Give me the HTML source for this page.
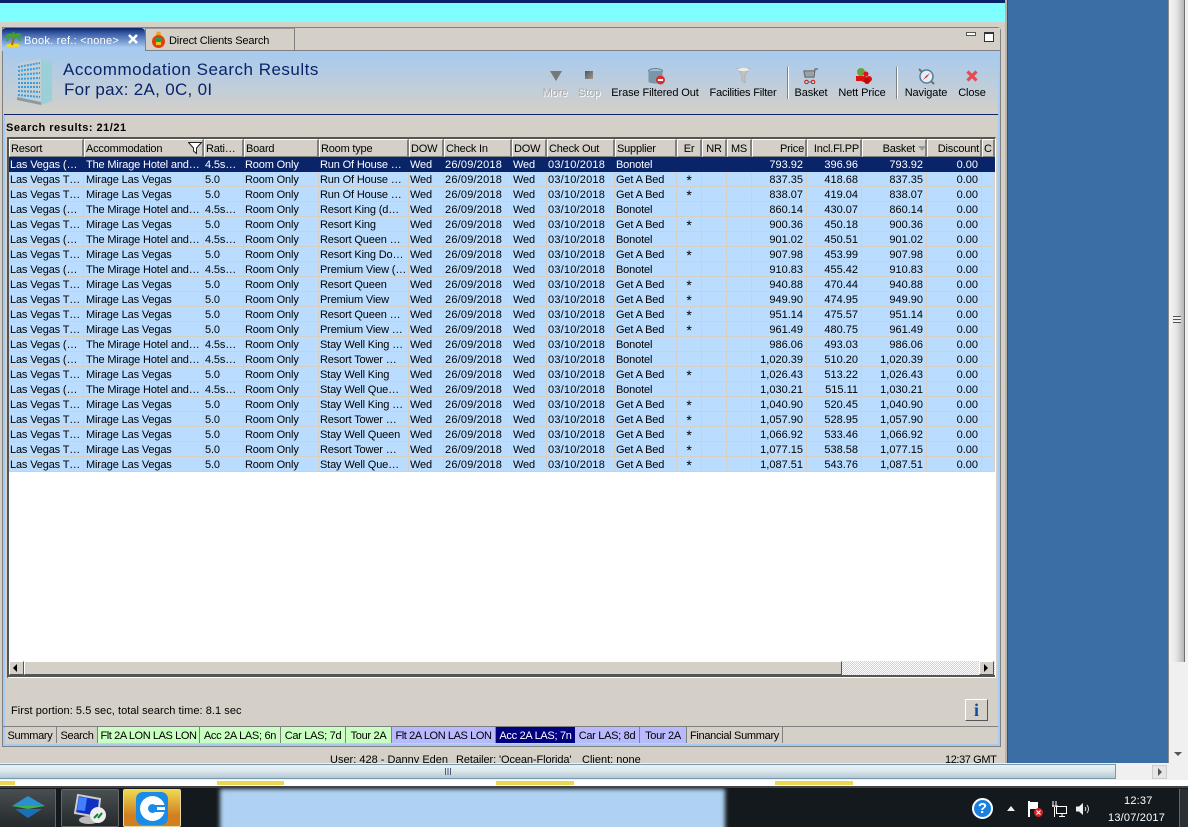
<!DOCTYPE html>
<html><head><meta charset="utf-8"><title>Accommodation Search Results</title>
<style>
html,body{margin:0;padding:0}
body{width:1188px;height:827px;overflow:hidden;position:relative;background:#d4d0c8;font:11px/15px "Liberation Sans",sans-serif;color:#000}
.a{position:absolute}
.t{position:absolute;white-space:nowrap}
table{border-collapse:separate;border-spacing:0;table-layout:fixed;width:986px;position:absolute;left:9px;top:139px}
th{font-weight:normal;text-align:left;padding:2px 0 0 1px;line-height:14px;letter-spacing:-.2px;background:#d4d0c8;border-top:1px solid #fff;border-left:1px solid #fff;border-right:2px solid #808080;border-bottom:1px solid #808080;box-sizing:border-box;height:18px;overflow:hidden;white-space:nowrap}
td{height:15px;padding:2px 0 0 1px;box-sizing:border-box;background:#b9dcff;border-right:1px solid #d4d0c8;border-bottom:1px solid #d4d0c8;white-space:nowrap;overflow:hidden;line-height:12px;letter-spacing:-.15px}
td:nth-child(2){padding-left:2px}
td:nth-child(7),td:nth-child(9){letter-spacing:.2px}
th.r,td.r{text-align:right}
td.r{padding:2px 3px 0 0;letter-spacing:0}
th.r{padding:2px 1px 0 0}
.c{text-align:center;padding:2px 0 0}
td.c{font-size:14px;padding-top:1px;line-height:12px}
tr.s td{background:#0a246a;color:#fff;border-color:#0a246a}
.tab{position:absolute;top:727px;height:16px;line-height:18px;text-align:center;border-right:1px solid #808080;box-sizing:border-box;white-space:nowrap;overflow:hidden;letter-spacing:-.3px}
.g{background:#c9ffc0}.l{background:#b9b9ff}
.lb{position:absolute;top:86px;line-height:14px;white-space:nowrap;transform:translateX(-50%);letter-spacing:-.1px}
.sep{position:absolute;top:67px;width:1px;height:32px;background:#808080;border-right:1px solid #fff}
</style></head><body>
<div class="a" style="left:0;top:0;width:1005px;height:3px;background:#0a246a"></div>
<div class="a" style="left:0;top:3px;width:1005px;height:19px;background:#7fffff"></div>
<div class="a" style="left:1005px;top:0;width:2px;height:763px;background:#b8b4ac"></div>
<div class="a" style="left:1007px;top:0;width:1px;height:763px;background:#504c48"></div>
<div class="a" style="left:1008px;top:0;width:160px;height:763px;background:#3a6ea5"></div>
<div class="a" style="left:1168px;top:0;width:20px;height:780px;background:#f0f0f0"></div>
<div class="a" style="left:1168px;top:0;width:1px;height:763px;background:#8a8a8a"></div>
<div class="a" style="left:1169px;top:0;width:15px;height:662px;background:linear-gradient(90deg,#f4f4f4,#e8e8e8 45%,#b8b8b8)"></div>
<div class="a" style="left:1184px;top:0;width:1px;height:662px;background:#707070"></div>
<div class="a" style="left:1173px;top:316px;width:8px;height:7px;background:repeating-linear-gradient(180deg,#555 0 1px,#eee 1px 3px)"></div>
<div class="a" style="left:1174px;top:752px;border-top:4px solid #555;border-left:4px solid transparent;border-right:4px solid transparent"></div>

<!-- window -->
<div class="a" style="left:2px;top:27px;width:999px;height:720px;box-sizing:border-box;border:1px solid #808080;border-top-right-radius:4px;background:#a6caf0"></div>
<div class="a" style="left:5px;top:51px;width:993px;height:693px;background:#d4d0c8"></div>
<div class="a" style="left:295px;top:28px;width:705px;height:22px;background:#d4d0c8;border-bottom:1px solid #808080"></div>
<div class="a" style="left:3px;top:51px;width:995px;height:64px;background:linear-gradient(180deg,#a6caf0,#d4d0c8)"></div>
<div class="a" style="left:4px;top:114px;width:994px;height:1px;background:#0a246a"></div>

<!-- tabs -->
<div class="a" style="left:2px;top:28px;width:143px;height:23px;border-radius:4px 4px 0 0;background:linear-gradient(180deg,#0a246a,#3a5ea8 25%,#a6caf0 85%)"></div>
<svg class="a" style="left:5px;top:31px" width="17" height="17" viewBox="0 0 17 17"><ellipse cx="8" cy="14.500" rx="7" ry="2" fill="#f2d820"/><path d="M9 6 C8 9 8 11 7 14" stroke="#a06a20" stroke-width="2" fill="none"/><path d="M9 6 Q5 1 1 6 M9 6 Q4 4 2 10 M9 6 Q13 1 16 5 M9 6 Q14 5 15 10 M9 6 Q9 2 8 1" stroke="#3aa828" stroke-width="2" fill="none"/></svg>
<div class="t" style="left:24px;top:34px;color:#fff;letter-spacing:.25px">Book. ref.: &lt;none&gt;</div>
<svg class="a" style="left:128px;top:34px" width="10" height="10"><path d="M1 1 L9 9 M9 1 L1 9" stroke="#fff" stroke-width="2.500"/></svg>
<div class="a" style="left:145px;top:28px;width:150px;height:23px;box-sizing:border-box;background:#d4d0c8;border:1px solid #808080;border-top:1px solid #999"></div>
<svg class="a" style="left:151px;top:31px" width="15" height="17" viewBox="0 0 15 17"><circle cx="7.500" cy="3" r="2.500" fill="#f0a020"/><circle cx="7.500" cy="10.500" r="6.500" fill="#e04010"/><rect x="4" y="7" width="7" height="4" fill="#20a040"/><rect x="5" y="11" width="5" height="3" fill="#f0c020"/></svg>
<div class="t" style="left:169px;top:34px;letter-spacing:-.15px">Direct Clients Search</div>
<div class="a" style="left:966px;top:32px;width:8px;height:2px;border:1px solid #555;background:#fff"></div>
<div class="a" style="left:984px;top:32px;width:8px;height:7px;border:1px solid #333;border-top-width:2px;background:#fff"></div>

<!-- header -->
<svg class="a" style="left:15px;top:57px" width="38" height="49" viewBox="0 0 38 49"><path d="M2 7 L26 2 L37 4 V44 L26 48 L2 43 Z" fill="#c4d0d4"/><path d="M26 2 L37 4 V44 L26 48 Z" fill="#9cd0d8"/><g fill="none" stroke="#3a9ce0" stroke-width="2" stroke-dasharray="2 1"><path d="M3 10 L25 6"/><path d="M3 14 L25 11"/><path d="M3 18 L25 16"/><path d="M3 22 L25 21"/><path d="M3 26 L25 26"/><path d="M3 30 L25 30"/><path d="M3 34 L25 35"/><path d="M3 38 L25 40"/></g><path d="M2 43 L26 48 L26 45 L2 40Z" fill="#8a9aa0"/></svg>
<div class="t" style="left:63px;top:60px;font-size:17px;line-height:20px;color:#0a246a;letter-spacing:.5px">Accommodation Search Results</div>
<div class="t" style="left:64px;top:80px;font-size:17px;line-height:20px;color:#0a246a;letter-spacing:.3px">For pax: 2A, 0C, 0I</div>

<!-- toolbar -->
<svg class="a" style="left:550px;top:71px" width="12" height="10"><path d="M0 0 H12 L6 10Z" fill="#777"/></svg>
<div class="a" style="left:585px;top:71px;width:8px;height:8px;background:linear-gradient(135deg,#555,#999)"></div>
<svg class="a" style="left:648px;top:68px" width="18" height="17"><ellipse cx="7.500" cy="3" rx="7" ry="2.500" fill="#a0c0d0" stroke="#708090"/><path d="M.5 3 V14 C3 16 12 16 14.500 14 V3" fill="#7a96a8"/><circle cx="12.500" cy="12" r="4.500" fill="#d83030"/><rect x="10" y="11" width="5" height="2" fill="#fff"/></svg>
<svg class="a" style="left:737px;top:68px" width="13" height="16"><path d="M0 0 H13 L8 7 V15 L5 13 V7Z" fill="#c0c4c0" stroke="#999" stroke-width=".5"/><ellipse cx="6.500" cy="1.500" rx="6" ry="1.500" fill="#eee"/></svg>
<div class="lb" style="left:555px;color:#a8a8a8;text-shadow:1px 1px 0 #fff">More</div>
<div class="lb" style="left:589px;color:#a8a8a8;text-shadow:1px 1px 0 #fff">Stop</div>
<div class="lb" style="left:655px">Erase Filtered Out</div>
<div class="lb" style="left:743px;letter-spacing:-.2px">Facilities Filter</div>
<div class="sep" style="left:787px"></div>
<svg class="a" style="left:803px;top:68px" width="16" height="16"><path d="M15 1 H12 L11 9 H2 L1 3 H12" fill="none" stroke="#666" stroke-width="1.200"/><path d="M3 3 V9 M5 3 V9 M7 3 V9 M9 3 V9 M1.500 5 H11 M1.500 7 H11" stroke="#888" stroke-width=".8"/><circle cx="3.500" cy="14" r="1.800" fill="none" stroke="#d01010"/><circle cx="10" cy="14" r="1.800" fill="none" stroke="#d01010"/><path d="M5 14 H8" stroke="#666"/></svg>
<div class="lb" style="left:811px">Basket</div>
<svg class="a" style="left:855px;top:68px" width="17" height="16"><circle cx="6" cy="4" r="4" fill="#6aa040"/><rect x="1" y="8" width="7" height="5" fill="#e01010"/><circle cx="11" cy="6" r="2.500" fill="#e01010"/><circle cx="9" cy="11" r="3" fill="#e01010"/><circle cx="14" cy="11" r="3" fill="#e01010"/><circle cx="12" cy="13" r="3" fill="#c00808"/></svg>
<div class="lb" style="left:862px">Nett Price</div>
<div class="sep" style="left:896px"></div>
<svg class="a" style="left:918px;top:68px" width="17" height="17"><circle cx="8.500" cy="8.500" r="6.500" fill="#dff0f8" stroke="#5a7a98" stroke-width="1.500"/><path d="M1 1 L4 4 M13 13 L16 16" stroke="#8a6a40" stroke-width="2"/><path d="M12 5 L8 8 L5 12 L9 9Z" fill="#d02020"/></svg>
<div class="lb" style="left:926px">Navigate</div>
<svg class="a" style="left:966px;top:70px" width="12" height="12"><path d="M1.500 1.500 L10.500 10.500 M10.500 1.500 L1.500 10.500" stroke="#e84850" stroke-width="3.200"/></svg>
<div class="lb" style="left:972px">Close</div>

<div class="t" style="left:6px;top:121px;font-weight:bold;letter-spacing:.5px">Search results: 21/21</div>

<!-- table box -->
<div class="a" style="left:7px;top:137px;width:989px;height:541px;box-sizing:border-box;background:#fff;border:2px solid #555;border-right:1px solid #fff;border-bottom:1px solid #fff"></div>
<table>
<colgroup><col style="width:75px"><col style="width:120px"><col style="width:40px"><col style="width:75px"><col style="width:90px"><col style="width:35px"><col style="width:68px"><col style="width:35px"><col style="width:68px"><col style="width:62px"><col style="width:25px"><col style="width:25px"><col style="width:25px"><col style="width:55px"><col style="width:55px"><col style="width:65px"><col style="width:55px"><col style="width:13px"></colgroup>
<tr><th>Resort</th><th>Accommodation</th><th>Rati…</th><th>Board</th><th>Room type</th><th>DOW</th><th>Check In</th><th>DOW</th><th>Check Out</th><th>Supplier</th><th class="c">Er</th><th class="c">NR</th><th class="c">MS</th><th class="r">Price</th><th class="r">Incl.Fl.PP</th><th class="r" style="padding-right:10px">Basket</th><th class="r">Discount</th><th>C</th></tr>
<tr class="s"><td>Las Vegas (…</td><td>The Mirage Hotel and…</td><td>4.5s…</td><td>Room Only</td><td>Run Of House …</td><td>Wed</td><td>26/09/2018</td><td>Wed</td><td>03/10/2018</td><td>Bonotel</td><td class="c"></td><td></td><td></td><td class="r">793.92</td><td class="r">396.96</td><td class="r">793.92</td><td class="r">0.00</td><td></td></tr>
<tr><td>Las Vegas T…</td><td>Mirage Las Vegas</td><td>5.0</td><td>Room Only</td><td>Run Of House …</td><td>Wed</td><td>26/09/2018</td><td>Wed</td><td>03/10/2018</td><td>Get A Bed</td><td class="c">*</td><td></td><td></td><td class="r">837.35</td><td class="r">418.68</td><td class="r">837.35</td><td class="r">0.00</td><td></td></tr>
<tr><td>Las Vegas T…</td><td>Mirage Las Vegas</td><td>5.0</td><td>Room Only</td><td>Run Of House …</td><td>Wed</td><td>26/09/2018</td><td>Wed</td><td>03/10/2018</td><td>Get A Bed</td><td class="c">*</td><td></td><td></td><td class="r">838.07</td><td class="r">419.04</td><td class="r">838.07</td><td class="r">0.00</td><td></td></tr>
<tr><td>Las Vegas (…</td><td>The Mirage Hotel and…</td><td>4.5s…</td><td>Room Only</td><td>Resort King (d…</td><td>Wed</td><td>26/09/2018</td><td>Wed</td><td>03/10/2018</td><td>Bonotel</td><td class="c"></td><td></td><td></td><td class="r">860.14</td><td class="r">430.07</td><td class="r">860.14</td><td class="r">0.00</td><td></td></tr>
<tr><td>Las Vegas T…</td><td>Mirage Las Vegas</td><td>5.0</td><td>Room Only</td><td>Resort King</td><td>Wed</td><td>26/09/2018</td><td>Wed</td><td>03/10/2018</td><td>Get A Bed</td><td class="c">*</td><td></td><td></td><td class="r">900.36</td><td class="r">450.18</td><td class="r">900.36</td><td class="r">0.00</td><td></td></tr>
<tr><td>Las Vegas (…</td><td>The Mirage Hotel and…</td><td>4.5s…</td><td>Room Only</td><td>Resort Queen …</td><td>Wed</td><td>26/09/2018</td><td>Wed</td><td>03/10/2018</td><td>Bonotel</td><td class="c"></td><td></td><td></td><td class="r">901.02</td><td class="r">450.51</td><td class="r">901.02</td><td class="r">0.00</td><td></td></tr>
<tr><td>Las Vegas T…</td><td>Mirage Las Vegas</td><td>5.0</td><td>Room Only</td><td>Resort King Do…</td><td>Wed</td><td>26/09/2018</td><td>Wed</td><td>03/10/2018</td><td>Get A Bed</td><td class="c">*</td><td></td><td></td><td class="r">907.98</td><td class="r">453.99</td><td class="r">907.98</td><td class="r">0.00</td><td></td></tr>
<tr><td>Las Vegas (…</td><td>The Mirage Hotel and…</td><td>4.5s…</td><td>Room Only</td><td>Premium View (…</td><td>Wed</td><td>26/09/2018</td><td>Wed</td><td>03/10/2018</td><td>Bonotel</td><td class="c"></td><td></td><td></td><td class="r">910.83</td><td class="r">455.42</td><td class="r">910.83</td><td class="r">0.00</td><td></td></tr>
<tr><td>Las Vegas T…</td><td>Mirage Las Vegas</td><td>5.0</td><td>Room Only</td><td>Resort Queen</td><td>Wed</td><td>26/09/2018</td><td>Wed</td><td>03/10/2018</td><td>Get A Bed</td><td class="c">*</td><td></td><td></td><td class="r">940.88</td><td class="r">470.44</td><td class="r">940.88</td><td class="r">0.00</td><td></td></tr>
<tr><td>Las Vegas T…</td><td>Mirage Las Vegas</td><td>5.0</td><td>Room Only</td><td>Premium View</td><td>Wed</td><td>26/09/2018</td><td>Wed</td><td>03/10/2018</td><td>Get A Bed</td><td class="c">*</td><td></td><td></td><td class="r">949.90</td><td class="r">474.95</td><td class="r">949.90</td><td class="r">0.00</td><td></td></tr>
<tr><td>Las Vegas T…</td><td>Mirage Las Vegas</td><td>5.0</td><td>Room Only</td><td>Resort Queen …</td><td>Wed</td><td>26/09/2018</td><td>Wed</td><td>03/10/2018</td><td>Get A Bed</td><td class="c">*</td><td></td><td></td><td class="r">951.14</td><td class="r">475.57</td><td class="r">951.14</td><td class="r">0.00</td><td></td></tr>
<tr><td>Las Vegas T…</td><td>Mirage Las Vegas</td><td>5.0</td><td>Room Only</td><td>Premium View …</td><td>Wed</td><td>26/09/2018</td><td>Wed</td><td>03/10/2018</td><td>Get A Bed</td><td class="c">*</td><td></td><td></td><td class="r">961.49</td><td class="r">480.75</td><td class="r">961.49</td><td class="r">0.00</td><td></td></tr>
<tr><td>Las Vegas (…</td><td>The Mirage Hotel and…</td><td>4.5s…</td><td>Room Only</td><td>Stay Well King …</td><td>Wed</td><td>26/09/2018</td><td>Wed</td><td>03/10/2018</td><td>Bonotel</td><td class="c"></td><td></td><td></td><td class="r">986.06</td><td class="r">493.03</td><td class="r">986.06</td><td class="r">0.00</td><td></td></tr>
<tr><td>Las Vegas (…</td><td>The Mirage Hotel and…</td><td>4.5s…</td><td>Room Only</td><td>Resort Tower …</td><td>Wed</td><td>26/09/2018</td><td>Wed</td><td>03/10/2018</td><td>Bonotel</td><td class="c"></td><td></td><td></td><td class="r">1,020.39</td><td class="r">510.20</td><td class="r">1,020.39</td><td class="r">0.00</td><td></td></tr>
<tr><td>Las Vegas T…</td><td>Mirage Las Vegas</td><td>5.0</td><td>Room Only</td><td>Stay Well King</td><td>Wed</td><td>26/09/2018</td><td>Wed</td><td>03/10/2018</td><td>Get A Bed</td><td class="c">*</td><td></td><td></td><td class="r">1,026.43</td><td class="r">513.22</td><td class="r">1,026.43</td><td class="r">0.00</td><td></td></tr>
<tr><td>Las Vegas (…</td><td>The Mirage Hotel and…</td><td>4.5s…</td><td>Room Only</td><td>Stay Well Que…</td><td>Wed</td><td>26/09/2018</td><td>Wed</td><td>03/10/2018</td><td>Bonotel</td><td class="c"></td><td></td><td></td><td class="r">1,030.21</td><td class="r">515.11</td><td class="r">1,030.21</td><td class="r">0.00</td><td></td></tr>
<tr><td>Las Vegas T…</td><td>Mirage Las Vegas</td><td>5.0</td><td>Room Only</td><td>Stay Well King …</td><td>Wed</td><td>26/09/2018</td><td>Wed</td><td>03/10/2018</td><td>Get A Bed</td><td class="c">*</td><td></td><td></td><td class="r">1,040.90</td><td class="r">520.45</td><td class="r">1,040.90</td><td class="r">0.00</td><td></td></tr>
<tr><td>Las Vegas T…</td><td>Mirage Las Vegas</td><td>5.0</td><td>Room Only</td><td>Resort Tower …</td><td>Wed</td><td>26/09/2018</td><td>Wed</td><td>03/10/2018</td><td>Get A Bed</td><td class="c">*</td><td></td><td></td><td class="r">1,057.90</td><td class="r">528.95</td><td class="r">1,057.90</td><td class="r">0.00</td><td></td></tr>
<tr><td>Las Vegas T…</td><td>Mirage Las Vegas</td><td>5.0</td><td>Room Only</td><td>Stay Well Queen</td><td>Wed</td><td>26/09/2018</td><td>Wed</td><td>03/10/2018</td><td>Get A Bed</td><td class="c">*</td><td></td><td></td><td class="r">1,066.92</td><td class="r">533.46</td><td class="r">1,066.92</td><td class="r">0.00</td><td></td></tr>
<tr><td>Las Vegas T…</td><td>Mirage Las Vegas</td><td>5.0</td><td>Room Only</td><td>Resort Tower …</td><td>Wed</td><td>26/09/2018</td><td>Wed</td><td>03/10/2018</td><td>Get A Bed</td><td class="c">*</td><td></td><td></td><td class="r">1,077.15</td><td class="r">538.58</td><td class="r">1,077.15</td><td class="r">0.00</td><td></td></tr>
<tr><td>Las Vegas T…</td><td>Mirage Las Vegas</td><td>5.0</td><td>Room Only</td><td>Stay Well Que…</td><td>Wed</td><td>26/09/2018</td><td>Wed</td><td>03/10/2018</td><td>Get A Bed</td><td class="c">*</td><td></td><td></td><td class="r">1,087.51</td><td class="r">543.76</td><td class="r">1,087.51</td><td class="r">0.00</td><td></td></tr>
</table>
<svg class="a" style="left:188px;top:142px" width="14" height="12"><path d="M.5 .5 H13.500 L8.500 6 V11.500 L5.500 9 V6Z" fill="#fff" stroke="#222"/></svg>
<div class="a" style="left:918px;top:146px;border-top:5px solid #999;border-left:4px solid transparent;border-right:4px solid transparent"></div>
<div class="a" style="left:9px;top:661px;width:986px;height:15px;background:repeating-conic-gradient(#d4d0c8 0 25%,#fff 0 50%) 0 0/2px 2px"></div>
<div class="a" style="left:9px;top:675px;width:986px;height:2px;background:#555"></div>
<div class="a" style="left:9px;top:661px;width:15px;height:14px;box-sizing:border-box;background:#d4d0c8;border:1px solid #fff;border-right-color:#555;border-bottom-color:#555"></div>
<div class="a" style="left:13px;top:664px;border-right:4px solid #000;border-top:4px solid transparent;border-bottom:4px solid transparent"></div>
<div class="a" style="left:24px;top:661px;width:818px;height:14px;box-sizing:border-box;background:#d4d0c8;border:1px solid #fff;border-right-color:#555;border-bottom-color:#555"></div>
<div class="a" style="left:979px;top:661px;width:15px;height:14px;box-sizing:border-box;background:#d4d0c8;border:1px solid #fff;border-right-color:#555;border-bottom-color:#555"></div>
<div class="a" style="left:984px;top:664px;border-left:4px solid #000;border-top:4px solid transparent;border-bottom:4px solid transparent"></div>

<div class="t" style="left:11px;top:703px;letter-spacing:.05px;padding-top:1px">First portion: 5.5 sec, total search time: 8.1 sec</div>
<div class="a" style="left:965px;top:699px;width:23px;height:22px;box-sizing:border-box;background:#d4d0c8;border:1px solid #fff;border-right:1px solid #555;border-bottom:1px solid #555;text-align:center;font:bold 18px/20px 'Liberation Serif',serif;color:#0a52a0;letter-spacing:0">i</div>

<div class="a" style="left:3px;top:726px;width:995px;height:1px;background:#808080"></div>
<div class="tab" style="left:4px;width:53px">Summary</div>
<div class="tab" style="left:57px;width:41px">Search</div>
<div class="tab g" style="left:98px;width:102px;letter-spacing:-.4px">Flt 2A LON LAS LON</div>
<div class="tab g" style="left:200px;width:81px">Acc 2A LAS; 6n</div>
<div class="tab g" style="left:281px;width:65px">Car LAS; 7d</div>
<div class="tab g" style="left:346px;width:46px">Tour 2A</div>
<div class="tab l" style="left:392px;width:104px;letter-spacing:-.4px">Flt 2A LON LAS LON</div>
<div class="tab" style="left:496px;width:79px;background:#000080;color:#fff;border:0">Acc 2A LAS; 7n</div>
<div class="tab l" style="left:575px;width:65px">Car LAS; 8d</div>
<div class="tab l" style="left:640px;width:47px">Tour 2A</div>
<div class="tab" style="left:687px;width:96px">Financial Summary</div>

<div class="t" style="left:330px;top:753px">User: 428 - Danny Eden</div>
<div class="t" style="left:456px;top:753px;letter-spacing:-.1px">Retailer: 'Ocean-Florida'</div>
<div class="t" style="left:582px;top:753px">Client: none</div>
<div class="t" style="left:945px;top:753px;letter-spacing:-.4px">12:37 GMT</div>

<!-- bottom scrollbar -->
<div class="a" style="left:0;top:763px;width:1188px;height:24px;background:#f0f0f0"></div>
<div class="a" style="left:0;top:764px;width:1116px;height:15px;box-sizing:border-box;border:1px solid #7a98a8;border-left:0;background:linear-gradient(180deg,#eaf2f6,#dbe7ec 45%,#b4c8d2)"></div>
<div class="a" style="left:445px;top:768px;width:7px;height:7px;background:repeating-linear-gradient(90deg,#557 0 1px,transparent 1px 2.500px)"></div>
<div class="a" style="left:1152px;top:765px;width:15px;height:14px;box-sizing:border-box;background:#e6e6e6;border:1px solid #ccc"></div>
<div class="a" style="left:1158px;top:768px;border-left:4px solid #555;border-top:4px solid transparent;border-bottom:4px solid transparent"></div>
<div class="a" style="left:0;top:780px;width:1188px;height:6px;background:#fff"></div>
<div class="a" style="left:0;top:781px;width:15px;height:4px;background:#ecd850"></div>
<div class="a" style="left:217px;top:781px;width:67px;height:4px;background:#ecd850"></div>
<div class="a" style="left:496px;top:781px;width:78px;height:4px;background:#ecd850"></div>
<div class="a" style="left:775px;top:781px;width:78px;height:4px;background:#ecd850"></div>
<div class="a" style="left:0;top:786px;width:1188px;height:2px;background:#444"></div>

<!-- taskbar -->
<div class="a" style="left:0;top:788px;width:1188px;height:39px;overflow:hidden;background:#14191d"><div class="a" style="left:220px;top:1px;width:505px;height:48px;background:#afd2f3;filter:blur(2px)"></div></div>
<div class="a" style="left:0;top:789px;width:56px;height:38px;background:linear-gradient(180deg,#4a4f52,#24292c);border-right:1px solid #666;box-sizing:border-box"></div>
<svg class="a" style="left:12px;top:796px" width="33" height="22"><path d="M16 0 L33 10 H0Z" fill="#2a90d0"/><path d="M0 10 H33 L16 13Z" fill="#40b050"/><path d="M3 13 H30 L16 22Z" fill="#1a70b8"/></svg>
<div class="a" style="left:61px;top:789px;width:58px;height:38px;box-sizing:border-box;background:linear-gradient(180deg,#4a4f52,#24292c);border:1px solid #666;border-radius:2px"></div>
<svg class="a" style="left:74px;top:793px" width="34" height="32"><path d="M4 2 L26 6 L24 24 L1 20Z" fill="#1030c0" stroke="#ccc" stroke-width="2"/><path d="M5 4 L13 5 L11 18 L3 17Z" fill="#4080ff"/><ellipse cx="15" cy="27" rx="10" ry="4" fill="#bbb"/><circle cx="24" cy="22" r="8" fill="#eee"/><path d="M20 25 L24 21 M24 25 L28 20" stroke="#108030" stroke-width="2"/></svg>
<div class="a" style="left:123px;top:789px;width:58px;height:38px;box-sizing:border-box;background:linear-gradient(180deg,#efd850,#d08020 70%);border:1px solid #e8d8a0;border-radius:2px"></div>
<div class="a" style="left:136px;top:792px;width:32px;height:33px;border-radius:7px;background:#1a8ce8"></div>
<div class="a" style="left:140px;top:796px;width:25px;height:25px;border-radius:50%;background:#fff"></div>
<div class="a" style="left:148px;top:804px;width:9px;height:9px;border-radius:50%;background:#1a8ce8"></div>
<div class="a" style="left:153px;top:805px;width:13px;height:7px;background:#1a8ce8"></div>
<div class="a" style="left:157px;top:807px;width:8px;height:3px;background:#fff"></div>

<div class="a" style="left:972px;top:798px;width:17px;height:17px;border:2px solid #fff;border-radius:50%;background:#1a80e0;color:#fff;text-align:center;font:bold 15px/17px 'Liberation Sans',sans-serif">?</div>
<div class="a" style="left:1007px;top:806px;border-bottom:5px solid #eee;border-left:4px solid transparent;border-right:4px solid transparent"></div>
<svg class="a" style="left:1028px;top:801px" width="16" height="17"><path d="M1 0 V16" stroke="#fff" stroke-width="2"/><path d="M2 1 H10 V8 H2Z" fill="#fff"/><circle cx="10.500" cy="11.500" r="4.500" fill="#e02020"/><path d="M8.500 9.500 L12.500 13.500 M12.500 9.500 L8.500 13.500" stroke="#fff"/></svg>
<svg class="a" style="left:1052px;top:801px" width="15" height="16"><path d="M4.500 5.500 H14.500 V12.500 H4.500Z" fill="none" stroke="#fff"/><path d="M7 15.500 H13 M10 13 V15 M1 0 V6 M4 0 V6 M0 5 H6 M2.500 6 V16" stroke="#fff"/></svg>
<svg class="a" style="left:1076px;top:802px" width="15" height="14"><path d="M0 4.500 H3 L7 1 V13 L3 9.500 H0Z" fill="#eee"/><path d="M9 5 Q10.500 7 9 9 M11 3 Q14 7 11 11" stroke="#ddd" fill="none"/></svg>
<div class="t" style="left:1124px;top:794px;color:#fff;letter-spacing:.2px">12:37</div>
<div class="t" style="left:1108px;top:811px;color:#fff;letter-spacing:.2px">13/07/2017</div>
<div class="a" style="left:1179px;top:789px;width:9px;height:38px;background:#2a2f33;border-left:1px solid #666;box-sizing:border-box"></div>
</body></html>
